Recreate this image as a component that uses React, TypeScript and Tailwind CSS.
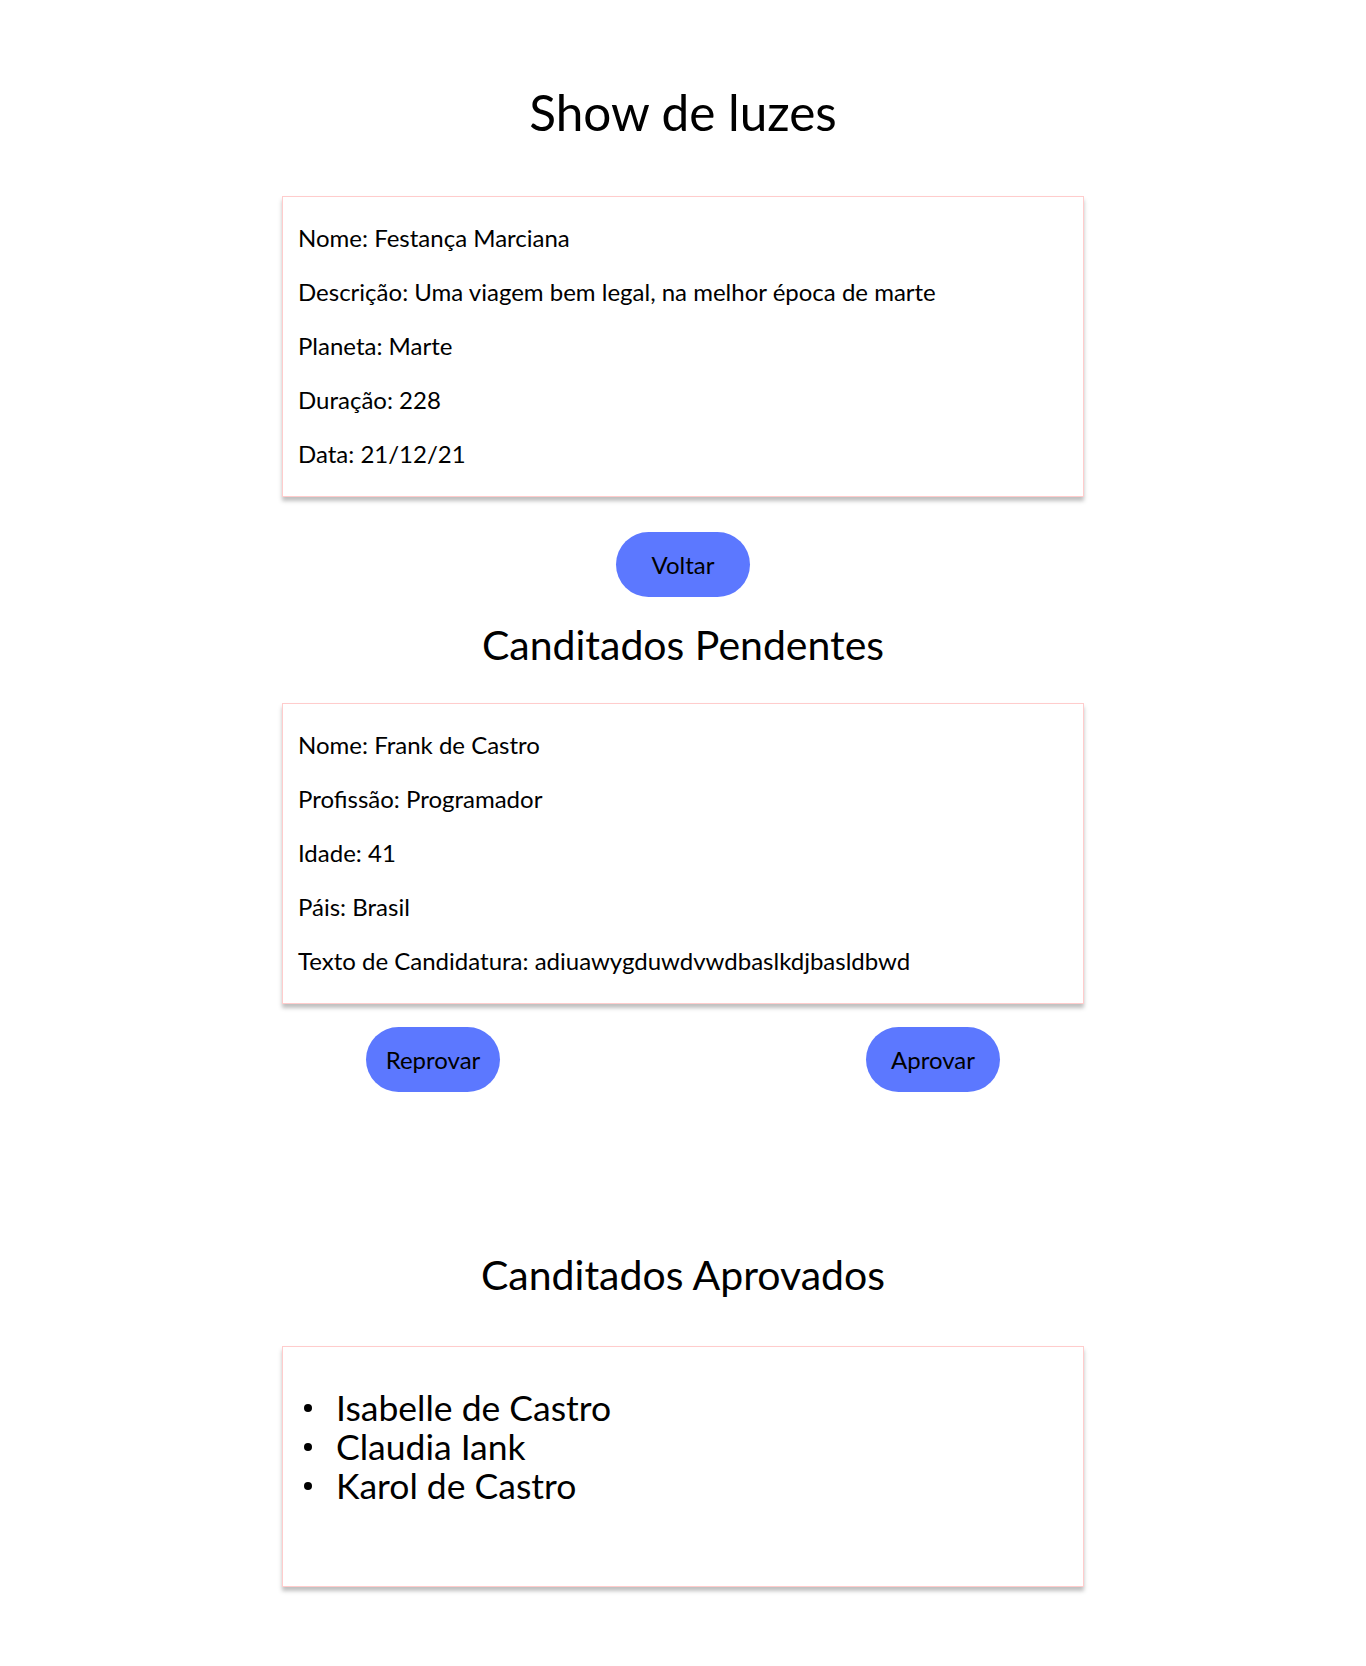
import React from "react";

type Field = { label: string; value: string };

const trip: Field[] = [
  { label: "Nome", value: "Festança Marciana" },
  { label: "Descrição", value: "Uma viagem bem legal, na melhor época de marte" },
  { label: "Planeta", value: "Marte" },
  { label: "Duração", value: "228" },
  { label: "Data", value: "21/12/21" },
];

const candidate: Field[] = [
  { label: "Nome", value: "Frank de Castro" },
  { label: "Profissão", value: "Programador" },
  { label: "Idade", value: "41" },
  { label: "Páis", value: "Brasil" },
  { label: "Texto de Candidatura", value: "adiuawygduwdvwdbaslkdjbasldbwd" },
];

const approved = ["Isabelle de Castro", "Claudia Iank", "Karol de Castro"];

function Card({ children, className = "" }: { children: React.ReactNode; className?: string }) {
  return (
    <div
      className={`mx-auto w-[802px] border border-[#ffcccc] bg-white px-[15px] shadow-[0_4px_4px_rgba(0,0,0,0.25)] ${className}`}
    >
      {children}
    </div>
  );
}

function FieldList({ fields }: { fields: Field[] }) {
  return (
    <div className="pt-[14px] pb-[15px]">
      {fields.map((f) => (
        <p key={f.label} className="text-[24px] leading-[54px]">
          {f.label}: {f.value}
        </p>
      ))}
    </div>
  );
}

function PillButton({ children }: { children: React.ReactNode }) {
  return (
    <button className="h-[65px] w-[134px] rounded-full bg-[#5c78ff] text-[24px] text-black">
      {children}
    </button>
  );
}

export default function App() {
  return (
    <div className="min-h-screen bg-white pt-[84px] text-black [font-family:Lato,'Open_Sans',sans-serif]">
      <h1 className="text-center text-[49.5px] leading-[56px]">Show de luzes</h1>

      <Card className="mt-[56px]">
        <FieldList fields={trip} />
      </Card>

      <div className="mt-[35px] flex justify-center">
        <PillButton>Voltar</PillButton>
      </div>

      <h2 className="mt-[23px] text-center text-[41px] leading-[50px]">Canditados Pendentes</h2>

      <Card className="mt-[33px]">
        <FieldList fields={candidate} />
      </Card>

      <div className="mt-[23px] flex justify-evenly">
        <PillButton>Reprovar</PillButton>
        <PillButton>Aprovar</PillButton>
      </div>

      <h2 className="mt-[158px] text-center text-[41px] leading-[50px]">Canditados Aprovados</h2>

      <Card className="mt-[46px] h-[241px]">
        <ul className="pt-[41px] pl-[6px] text-[35.5px] leading-[39px]">
          {approved.map((name) => (
            <li key={name} className="flex items-center">
              <span className="mr-[24px] h-[8px] w-[8px] rounded-full bg-black" />
              {name}
            </li>
          ))}
        </ul>
      </Card>
    </div>
  );
}
